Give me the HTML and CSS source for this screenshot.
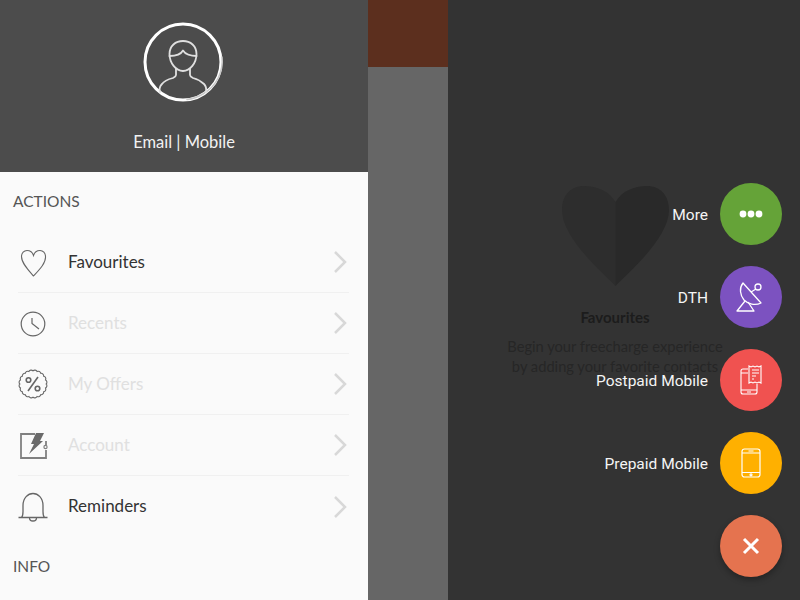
FILE: index.html
```html
<!DOCTYPE html>
<html lang="en">
<head>
  <meta charset="UTF-8" />
  <title>Favourites</title>
  <link rel="stylesheet" href="styles.css">
</head>
<body>
  <div class="app">
    <aside class="drawer">
      <header class="profile">
        <svg class="avatar" width="82" height="82" viewBox="0 0 82 82" fill="none" stroke="#e0e0e0" stroke-width="1.800" stroke-linecap="round" stroke-linejoin="round">
          <circle cx="40" cy="41" r="38" stroke="#fff" stroke-width="3"/>
          <path d="M79 36c1.500 14-5 29-19 37-5 3-10 5-16 5.500" stroke="#c8c8c8" stroke-width="1.500"/>
          <path d="M26.500 33c0-8 6-13 13.500-13s13.500 5 13.500 13c0 9-6.500 17-13.500 17s-13.500-8-13.500-17z"/>
          <path d="M26.500 35c5 0 11-1 13.500-5.500 2 3.500 8 5.500 13.500 5.500"/>
          <path d="M33 48v6c0 1-1 2-3 3-4 1-9 3-11 6-2 2-3 5-2 8"/>
          <path d="M47 48v6c0 1 1 2 3 3 4 1 8 3 11 6 2 2 2.500 5 2 8"/>
        </svg>
        <div class="profile-name">Email | Mobile</div>
      </header>

      <div class="menu">
        <h2 class="menu-title">ACTIONS</h2>
        <ul class="menu-list">
          <li class="menu-item">
            <svg class="menu-icon" width="30" height="30" viewBox="0 0 30 30" fill="none" stroke="#666" stroke-width="1.100">
              <path d="M15.500 29C10 23 3.500 16 3.500 9.500 3.500 6 6 3.500 9 3.500c3 0 5.500 1.800 6.500 5 1-3.200 3.500-5 6.500-5 3 0 5.500 2.500 5.500 6C28 16 21 23 15.500 29z"/>
            </svg>
            <span class="menu-label">Favourites</span>
            <svg class="chevron" width="16" height="24" viewBox="0 0 16 24" fill="none" stroke="#d8d8d8" stroke-width="2.500"><path d="M2 2l10 10L2 22"/></svg>
          </li>
          <li class="menu-item is-disabled">
            <svg class="menu-icon" width="30" height="30" viewBox="0 0 30 30" fill="none" stroke="#666" stroke-width="1.200">
              <circle cx="15" cy="16" r="11.800"/>
              <path d="M14 10v5.500l7 5.500"/>
            </svg>
            <span class="menu-label">Recents</span>
            <svg class="chevron" width="16" height="24" viewBox="0 0 16 24" fill="none" stroke="#d8d8d8" stroke-width="2.500"><path d="M2 2l10 10L2 22"/></svg>
          </li>
          <li class="menu-item is-disabled">
            <svg class="menu-icon" width="30" height="30" viewBox="0 0 30 30" fill="none" stroke="#666" stroke-width="1.100">
              <path d="M28.200 15A2.600 2.600 0 0 1 27.550 19.080A2.600 2.600 0 0 1 25.680 22.760A2.600 2.600 0 0 1 22.760 25.680A2.600 2.600 0 0 1 19.080 27.550A2.600 2.600 0 0 1 15 28.200A2.600 2.600 0 0 1 10.920 27.550A2.600 2.600 0 0 1 7.240 25.680A2.600 2.600 0 0 1 4.320 22.760A2.600 2.600 0 0 1 2.450 19.080A2.600 2.600 0 0 1 1.800 15A2.600 2.600 0 0 1 2.450 10.920A2.600 2.600 0 0 1 4.320 7.240A2.600 2.600 0 0 1 7.240 4.320A2.600 2.600 0 0 1 10.920 2.450A2.600 2.600 0 0 1 15 1.800A2.600 2.600 0 0 1 19.080 2.450A2.600 2.600 0 0 1 22.760 4.320A2.600 2.600 0 0 1 25.680 7.240A2.600 2.600 0 0 1 27.550 10.920A2.600 2.600 0 0 1 28.200 15z"/>
              <path d="M10 22L20 8" stroke-width="1.600"/>
              <circle cx="10.500" cy="11" r="2.300" stroke-width="1.600"/>
              <circle cx="19.500" cy="19.500" r="2.300" stroke-width="1.600"/>
            </svg>
            <span class="menu-label">My Offers</span>
            <svg class="chevron" width="16" height="24" viewBox="0 0 16 24" fill="none" stroke="#d8d8d8" stroke-width="2.500"><path d="M2 2l10 10L2 22"/></svg>
          </li>
          <li class="menu-item is-disabled">
            <svg class="menu-icon" width="30" height="30" viewBox="0 0 30 30" fill="none" stroke="#808080" stroke-width="1.800">
              <path d="M17 4H3v24h25v-8M28 15v-4"/>
              <circle cx="27.500" cy="17" r="1.600" stroke-width="1.200"/>
              <path d="M18 3h8l-4 8h3L11 24l5-10h-3z" fill="#6a6a6a" stroke="none"/>
            </svg>
            <span class="menu-label">Account</span>
            <svg class="chevron" width="16" height="24" viewBox="0 0 16 24" fill="none" stroke="#d8d8d8" stroke-width="2.500"><path d="M2 2l10 10L2 22"/></svg>
          </li>
          <li class="menu-item">
            <svg class="menu-icon" width="30" height="30" viewBox="0 0 30 30" fill="none" stroke="#666" stroke-width="1.300">
              <path d="M.5 25.500h29M3.500 25.500c1-1 1.500-3 1.500-6v-6C5 6 10 1.500 15 1.500S25 6 25 13.500v6c0 3 .5 5 1.500 6"/>
              <path d="M11.500 26c0 2 1.500 3 3.500 3s3.500-1 3.500-3"/>
            </svg>
            <span class="menu-label">Reminders</span>
            <svg class="chevron" width="16" height="24" viewBox="0 0 16 24" fill="none" stroke="#d8d8d8" stroke-width="2.500"><path d="M2 2l10 10L2 22"/></svg>
          </li>
        </ul>
        <h2 class="menu-title info-title">INFO</h2>
      </div>
    </aside>

    <div class="strip">
      <div class="strip-top"></div>
    </div>

    <main class="panel">
      <section class="empty-state">
        <svg class="empty-heart" width="107" height="100" viewBox="0 0 107 100">
          <path d="M53.500 100C40 86 0 52 0 24 0 8 10 0 22 0 35 0 47 5 53.500 16z" fill="#2d2d2d"/>
          <path d="M53.500 100C67 86 107 52 107 24 107 8 97 0 85 0 72 0 60 5 53.500 16z" fill="#292929"/>
        </svg>
        <h3 class="empty-title">Favourites</h3>
        <p class="empty-text">Begin your freecharge experience<br>by adding your favorite contacts</p>
      </section>

      <div class="fab-list">
        <div class="fab-row">
          <span class="fab-label">More</span>
          <div class="fab fab-more">
            <svg width="26" height="10" viewBox="0 0 26 10" fill="#fff"><circle cx="5" cy="5" r="3.400"/><circle cx="13" cy="5" r="3.400"/><circle cx="21" cy="5" r="3.400"/></svg>
          </div>
        </div>
        <div class="fab-row">
          <span class="fab-label">DTH</span>
          <div class="fab fab-dth">
            <svg width="32" height="32" viewBox="0 0 32 32" fill="none" stroke="#fff" stroke-width="1.300" stroke-linejoin="round">
              <path d="M8 2C4 7 5 14 9 19c4 4 11 6 17 3z"/>
              <path d="M16 11l5-3"/>
              <circle cx="23" cy="6" r="3"/>
              <path d="M10 20L2 30h17l-6-9"/>
            </svg>
          </div>
        </div>
        <div class="fab-row">
          <span class="fab-label">Postpaid Mobile</span>
          <div class="fab fab-postpaid">
            <svg width="22" height="30" viewBox="0 0 22 30" fill="none" stroke="#fff" stroke-width="1.100">
              <path d="M8 4H3C2 4 1 5 1 6v21c0 1 1 2 2 2h12c1 0 2-1 2-2v-8"/>
              <path d="M1 8h7M1 25h16M7 27h4"/>
              <path d="M9 1l2 1 2-1 2 1 2-1 2 1 2-1v17l-2-1-2 1-2-1-2 1-2-1-2 1z"/>
              <path d="M12 5h7M12 8h7M12 11h4M12 14h2"/>
            </svg>
          </div>
        </div>
        <div class="fab-row">
          <span class="fab-label">Prepaid Mobile</span>
          <div class="fab fab-prepaid">
            <svg width="20" height="30" viewBox="0 0 20 30" fill="none" stroke="#fff" stroke-width="1.200">
              <rect x="1" y="1" width="18" height="28" rx="2.500"/>
              <path d="M1 5h18M1 24.500h18M7.500 3h5"/>
              <circle cx="10" cy="26.800" r="1"/>
            </svg>
          </div>
        </div>
        <div class="fab-row">
          <div class="fab fab-close">
            <svg width="18" height="18" viewBox="0 0 18 18" stroke="#fff" stroke-width="3"><path d="M2 2l14 14M16 2L2 16"/></svg>
          </div>
        </div>
      </div>
    </main>
  </div>
</body>
</html>
```

FILE: styles.css
```css
html,
body {
  margin: 0;
  height: 100%;
  overflow: hidden;
}
body {
  font-family: Lato, 'Noto Sans', sans-serif;
  background-color: #333333;
}
.app {
  display: flex;
  width: 800px;
  height: 600px;
}
.drawer {
  width: 368px;
  flex-shrink: 0;
  background-color: #fafafa;
}
.profile {
  height: 172px;
  background-color: #4c4c4c;
  display: flex;
  flex-direction: column;
  align-items: center;
  padding-top: 21px;
  box-sizing: border-box;
}
.avatar {
  display: block;
}
.profile-name {
  margin-top: 27px;
  color: #f2f2f2;
  font-size: 16.500px;
  line-height: 24px;
}
.menu {
  padding: 18px 19px 0 13px;
}
.menu-title {
  margin: 0;
  font-size: 15.500px;
  font-weight: 400;
  line-height: 22px;
  color: #555555;
}
.menu-list {
  list-style: none;
  margin: 20px 0 0 5px;
  padding: 0;
}
.menu-item {
  height: 61px;
  box-sizing: border-box;
  display: flex;
  align-items: center;
  border-bottom: 1px solid #f0f0f0;
}
.menu-item:last-child {
  border-bottom: none;
}
.menu-icon {
  flex-shrink: 0;
}
.menu-label {
  flex: 1;
  margin-left: 20px;
  padding-bottom: 2px;
  font-size: 17px;
  color: #333333;
}
.is-disabled .menu-label {
  color: #e0e0e0;
}
.info-title {
  margin-top: 18px;
}
.strip {
  width: 80px;
  flex-shrink: 0;
  background-color: #666666;
}
.strip-top {
  height: 67px;
  background-color: #5c2f1e;
}
.panel {
  position: relative;
  flex: 1;
  background-color: #333333;
}
.empty-state {
  display: flex;
  flex-direction: column;
  align-items: center;
  width: 334px;
  padding-top: 186px;
}
.empty-heart {
  display: block;
}
.empty-title {
  margin: 21px 0 0;
  font-size: 15px;
  line-height: 20px;
  font-weight: 700;
  color: #1c1c1c;
}
.empty-text {
  margin: 9px 0 0;
  font-size: 14.700px;
  line-height: 20px;
  text-align: center;
  color: #262626;
}
.fab-list {
  position: absolute;
  top: 183px;
  right: 18px;
  display: flex;
  flex-direction: column;
  align-items: flex-end;
  gap: 21px;
}
.fab-row {
  display: flex;
  align-items: center;
  gap: 12px;
}
.fab-label {
  padding-top: 1px;
  font-family: Roboto, sans-serif;
  font-size: 15.500px;
  color: #f5f5f5;
}
.fab {
  width: 62px;
  height: 62px;
  border-radius: 50%;
  display: flex;
  align-items: center;
  justify-content: center;
}
.fab-more {
  background-color: #65a338;
}
.fab-dth {
  background-color: #7c52c0;
}
.fab-postpaid {
  background-color: #f05250;
}
.fab-prepaid {
  background-color: #ffb000;
}
.fab-close {
  background-color: #e5734f;
  box-shadow: 0 3px 6px rgba(0, 0, 0, 0.3);
}
```
